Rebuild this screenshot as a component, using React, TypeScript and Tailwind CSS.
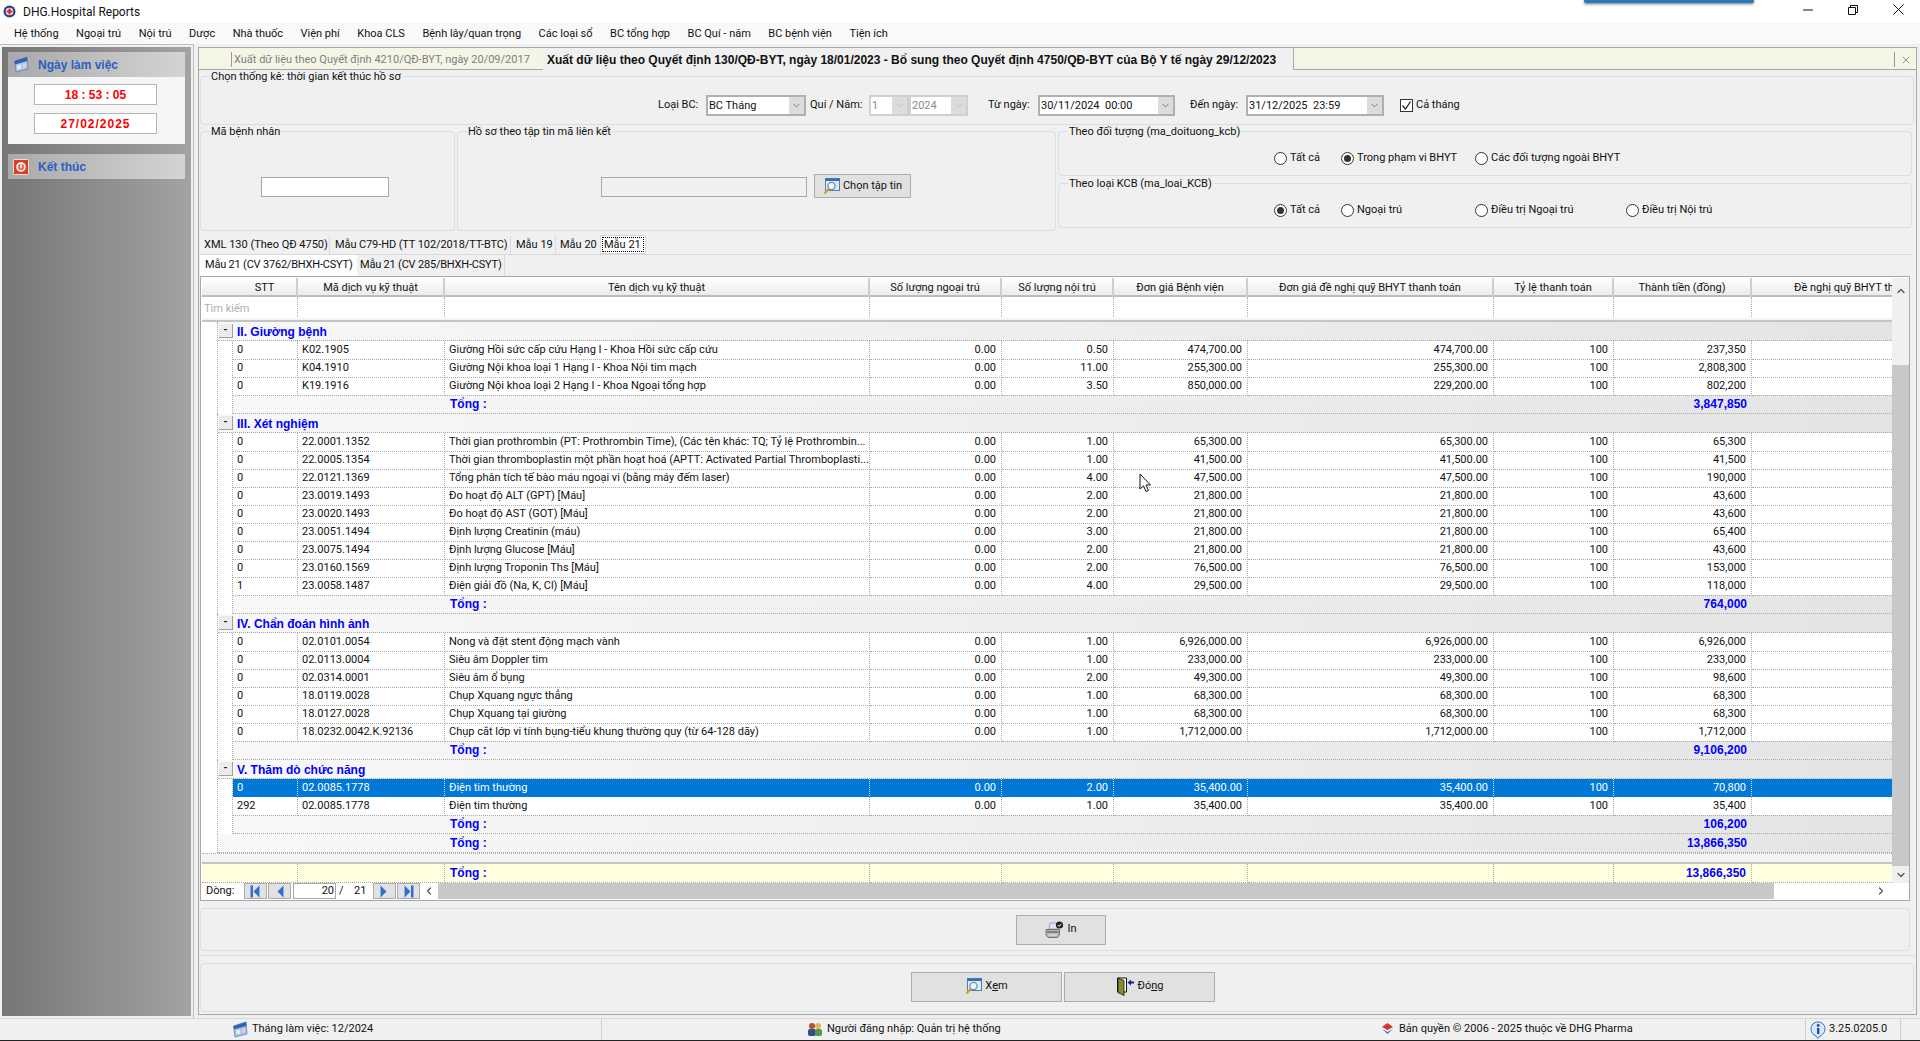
import { ChevronDown, ChevronLeft, ChevronRight, ChevronUp, X } from "lucide-react";
import type { ReactNode } from "react";

type Row = [string, string, string, string, string, string, string];
type Group = { title: string; total: string; rows: Row[]; selected?: number };

const menu = [
  "Hệ thống",
  "Ngoại trú",
  "Nội trú",
  "Dược",
  "Nhà thuốc",
  "Viện phí",
  "Khoa CLS",
  "Bệnh lây/quan trọng",
  "Các loại sổ",
  "BC tổng hợp",
  "BC Quí - năm",
  "BC bệnh viện",
  "Tiện ích",
];

const groups: Group[] = [
  {
    title: "II. Giường bệnh",
    total: "3,847,850",
    rows: [
      ["0", "K02.1905", "Giường Hồi sức cấp cứu Hạng I - Khoa Hồi sức cấp cứu", "0.50", "474,700.00", "474,700.00", "237,350"],
      ["0", "K04.1910", "Giường Nội khoa loại 1 Hạng I - Khoa Nội tim mạch", "11.00", "255,300.00", "255,300.00", "2,808,300"],
      ["0", "K19.1916", "Giường Nội khoa loại 2 Hạng I - Khoa Ngoại tổng hợp", "3.50", "850,000.00", "229,200.00", "802,200"],
    ],
  },
  {
    title: "III. Xét nghiệm",
    total: "764,000",
    rows: [
      ["0", "22.0001.1352", "Thời gian prothrombin (PT: Prothrombin Time), (Các tên khác: TQ; Tỷ lệ Prothrombin...", "1.00", "65,300.00", "65,300.00", "65,300"],
      ["0", "22.0005.1354", "Thời gian thromboplastin một phần hoạt hoá (APTT: Activated Partial Thromboplasti...", "1.00", "41,500.00", "41,500.00", "41,500"],
      ["0", "22.0121.1369", "Tổng phân tích tế bào máu ngoại vi (bằng máy đếm laser)", "4.00", "47,500.00", "47,500.00", "190,000"],
      ["0", "23.0019.1493", "Đo hoạt độ ALT (GPT) [Máu]", "2.00", "21,800.00", "21,800.00", "43,600"],
      ["0", "23.0020.1493", "Đo hoạt độ AST (GOT) [Máu]", "2.00", "21,800.00", "21,800.00", "43,600"],
      ["0", "23.0051.1494", "Định lượng Creatinin (máu)", "3.00", "21,800.00", "21,800.00", "65,400"],
      ["0", "23.0075.1494", "Định lượng Glucose [Máu]", "2.00", "21,800.00", "21,800.00", "43,600"],
      ["0", "23.0160.1569", "Định lượng Troponin Ths [Máu]", "2.00", "76,500.00", "76,500.00", "153,000"],
      ["1", "23.0058.1487", "Điện giải đồ (Na, K, Cl) [Máu]", "4.00", "29,500.00", "29,500.00", "118,000"],
    ],
  },
  {
    title: "IV. Chẩn đoán hình ảnh",
    total: "9,106,200",
    rows: [
      ["0", "02.0101.0054", "Nong và đặt stent động mạch vành", "1.00", "6,926,000.00", "6,926,000.00", "6,926,000"],
      ["0", "02.0113.0004", "Siêu âm Doppler tim", "1.00", "233,000.00", "233,000.00", "233,000"],
      ["0", "02.0314.0001", "Siêu âm ổ bụng", "2.00", "49,300.00", "49,300.00", "98,600"],
      ["0", "18.0119.0028", "Chụp Xquang ngực thẳng", "1.00", "68,300.00", "68,300.00", "68,300"],
      ["0", "18.0127.0028", "Chụp Xquang tại giường", "1.00", "68,300.00", "68,300.00", "68,300"],
      ["0", "18.0232.0042.K.92136", "Chụp cắt lớp vi tính bụng-tiểu khung thường quy (từ 64-128 dãy)", "1.00", "1,712,000.00", "1,712,000.00", "1,712,000"],
    ],
  },
  {
    title: "V. Thăm dò chức năng",
    total: "106,200",
    selected: 0,
    rows: [
      ["0", "02.0085.1778", "Điện tim thường", "2.00", "35,400.00", "35,400.00", "70,800"],
      ["292", "02.0085.1778", "Điện tim thường", "1.00", "35,400.00", "35,400.00", "35,400"],
    ],
  },
];

const headers = [
  "Mã dịch vụ kỹ thuật",
  "Tên dịch vụ kỹ thuật",
  "Số lượng ngoại trú",
  "Số lượng nội trú",
  "Đơn giá Bệnh viện",
  "Đơn giá đề nghị quỹ BHYT thanh toán",
  "Tỷ lệ thanh toán",
  "Thành tiền (đồng)",
];

const bold = "font-['Liberation_Sans',Arial,sans-serif] text-[12px] font-bold";
const cellLine = "border-r border-b border-dotted border-[#a9a9a9]";

const CalendarIcon = () => (
  <svg width="16" height="17" viewBox="0 0 16 17">
    <path d="M1.5 5 L14 1 L15 13 L3 16 Z" fill="#a9c4ea" stroke="#4f7cc0" strokeWidth="0.7" />
    <path d="M1.5 5 L14 1 L14.4 5 L2 8.6 Z" fill="#2f63b8" />
    <path d="M4 9.5 L8 8.5 L8.4 12.6 L4.5 13.6 Z" fill="#e4edf9" />
    <path d="M9.5 8 L13 7 L13.4 11 L10 12 Z" fill="#f0c9c4" />
  </svg>
);

const SearchFileIcon = () => (
  <svg width="17" height="17" viewBox="0 0 17 17">
    <rect x="2.5" y="0.5" width="14" height="12" fill="#dfeaf5" stroke="#4a7fb8" />
    <rect x="2.5" y="0.5" width="14" height="2.5" fill="#2f6fc0" />
    <circle cx="8.5" cy="8" r="3.6" fill="#eef6fb" stroke="#6d8fa8" strokeWidth="1.3" />
    <path d="M5.8 10.8 L1.5 15.5" stroke="#d99a2b" strokeWidth="2.2" />
  </svg>
);

const PrintIcon = () => (
  <svg width="19" height="18" viewBox="0 0 19 18">
    <path d="M5 2 H12 L13 8 H4 Z" fill="#dbe6f2" stroke="#8a97a5" strokeWidth="0.8" />
    <path d="M1 8.5 H14.5 V14 L12.5 16.5 H3 L1 14 Z" fill="#b4b4b4" stroke="#5f5f5f" strokeWidth="0.8" />
    <path d="M2 11 H13.5" stroke="#4f4f4f" />
    <path d="M3.5 14 H12" stroke="#efefef" />
    <circle cx="14.5" cy="4" r="3.6" fill="#222" />
    <path d="M12.8 4 L14.2 5.4 L16.3 2.8" fill="none" stroke="#fff" strokeWidth="1" />
  </svg>
);

const ExitIcon = () => (
  <svg width="19" height="19" viewBox="0 0 19 19">
    <path d="M1.5 1 H10.5 V15 H1.5 Z" fill="#fff" stroke="#111" strokeWidth="1" />
    <path d="M2 1 L8 3.5 V18.5 L2 15.5 Z" fill="#8c8a2a" stroke="#111" strokeWidth="0.8" />
    <path d="M11.5 5.5 L15 2.5 V4.5 H18 V6.5 H15 V8.5 Z" fill="#12249a" />
  </svg>
);

const NavIcon = ({ dir, end }: { dir: "left" | "right"; end?: boolean }) => (
  <button className="flex h-[16px] w-[23px] items-center justify-center border border-[#adadad] bg-[#e1e1e1]">
    <svg width="11" height="13" viewBox="0 0 11 13">
      {dir === "left" ? (
        <>
          {end && <rect x="0.5" y="0.5" width="2.5" height="12" fill="#2f6fd0" />}
          <path d="M9.5 0.5 V12.5 L3.5 6.5 Z" fill="#2f6fd0" stroke="#8fb4e8" strokeWidth="0.5" />
        </>
      ) : (
        <>
          <path d="M1.5 0.5 V12.5 L7.5 6.5 Z" fill="#2f6fd0" stroke="#8fb4e8" strokeWidth="0.5" />
          {end && <rect x="8" y="0.5" width="2.5" height="12" fill="#2f6fd0" />}
        </>
      )}
    </svg>
  </button>
);

const GroupBox = ({ label, className, children }: { label?: string; className: string; children?: ReactNode }) => (
  <div className={`relative rounded-[4px] border border-[#d5dfe5] ${className}`}>
    {label && <span className="absolute -top-[7px] left-[9px] whitespace-nowrap bg-[#f0f0f0] px-[1px] leading-[14px]">{label}</span>}
    {children}
  </div>
);

const Combo = ({ value, className, disabled }: { value: string; className: string; disabled?: boolean }) => (
  <div className={`flex h-[21px] items-center border-2 bg-white ${disabled ? "border-[#d0d0d0] text-[#8a8a8a]" : "border-[#b0b0b0]"} ${className}`}>
    <span className="flex-1 whitespace-pre pl-[1px] leading-none">{value}</span>
    <span className="flex h-full w-[15px] items-center justify-center bg-[#dcdcdc]">
      <ChevronDown size={11} color={disabled ? "#b5b5b5" : "#555"} strokeWidth={1.5} />
    </span>
  </div>
);

const Radio = ({ label, checked, className }: { label: string; checked?: boolean; className: string }) => (
  <div className={`flex items-center gap-[3px] ${className}`}>
    <span className="flex h-[13px] w-[13px] items-center justify-center rounded-full border border-[#333] bg-white">
      {checked && <span className="h-[7px] w-[7px] rounded-full bg-[#333]" />}
    </span>
    <span>{label}</span>
  </div>
);

const BlockButton = ({ label, className, children }: { label: ReactNode; className: string; children: ReactNode }) => (
  <button className={`flex items-center justify-center gap-[3px] border border-[#adadad] bg-[#e1e1e1] ${className}`}>
    {children}
    <span>{label}</span>
  </button>
);

const SideHeader = ({ label, children }: { label: string; children: ReactNode }) => (
  <div className={`flex h-[25px] items-center gap-[9px] bg-linear-to-r from-[#a9a9a9] to-[#d4d4d4] pl-[5px] text-[#2a5fc4] ${bold}`}>
    {children}
    <span>{label}</span>
  </div>
);

const DataRow = ({ row, selected }: { row: Row; selected: boolean }) => {
  const line = selected ? "border-r border-b border-dotted border-white/80" : cellLine;
  const nums = ["0.00", row[3], row[4], row[5], "100", row[6]];
  return (
    <div className={`grid h-[18px] grid-cols-[65px_147px_425px_132px_112px_134px_246px_120px_138px_140px] leading-[18px] ${selected ? "bg-[#0078d7] text-white" : "bg-white"}`}>
      {[row[0], row[1], row[2]].map((v, i) => (
        <div key={i} className={`${line} overflow-hidden whitespace-nowrap pl-[4px]`}>{v}</div>
      ))}
      {nums.map((v, i) => (
        <div key={i} className={`${line} pr-[5px] text-right`}>{v}</div>
      ))}
      <div className={selected ? "border-b border-dotted border-white/80" : "border-b border-dotted border-[#a9a9a9]"} />
    </div>
  );
};

const TotalRow = ({ value, indent }: { value: string; indent: boolean }) => (
  <div className={`grid h-[19px] border-b border-dotted border-[#a9a9a9] bg-linear-to-r from-[#f8f8f8] to-[#e4e4e4] leading-[19px] text-[#0000ff] ${bold} ${indent ? "grid-cols-[65px_147px_425px_882px_140px]" : "grid-cols-[80px_147px_425px_882px_140px]"}`}>
    <div />
    <div />
    <div className="pl-[5px]">Tổng :</div>
    <div className="pr-[5px] text-right">{value}</div>
    <div />
  </div>
);

const GroupBlock = ({ group }: { group: Group }) => (
  <div className="ml-[15px] border-l border-dotted border-[#a9a9a9]">
    <div className="flex h-[19px] items-center border-b border-dotted border-[#a9a9a9] bg-linear-to-r from-[#f8f8f8] to-[#e4e4e4]">
      <span className="ml-[1px] flex h-[14px] w-[14px] items-start justify-center border-r border-b border-[#a0a0a0] bg-[#ececec] text-[10px] font-bold leading-[11px]">-</span>
      <span className={`pl-[4px] pt-[1px] text-[#0000ff] ${bold}`}>{group.title}</span>
    </div>
    <div className="ml-[14px] border-l border-dotted border-[#a9a9a9]">
      {group.rows.map((row, i) => (
        <DataRow key={i} row={row} selected={group.selected === i} />
      ))}
      <TotalRow value={group.total} indent />
    </div>
  </div>
);

export default function App() {
  return (
    <div className="relative flex h-[1041px] w-[1920px] flex-col overflow-hidden bg-[#f0f0f0] font-['Roboto',Arial,sans-serif] text-[11px] text-[#111]">
      {/* title bar */}
      <div className="flex h-[23px] items-center bg-white">
        <svg className="ml-[3px]" width="13" height="13" viewBox="0 0 13 13">
          <circle cx="6.5" cy="6.5" r="6" fill="#27408b" />
          <circle cx="6.5" cy="6.5" r="3.8" fill="#f4f4f4" />
          <path d="M5.5 3.5 H7.5 V5.5 H9.5 V7.5 H7.5 V9.5 H5.5 V7.5 H3.5 V5.5 H5.5 Z" fill="#e01b24" />
        </svg>
        <span className="ml-[7px] text-[12px]">DHG.Hospital Reports</span>
        <div className="ml-auto flex items-center pb-[4px] pr-[2px]">
          <svg className="mr-[35px]" width="10" height="10" viewBox="0 0 10 10"><path d="M0 5 H10" stroke="#111" /></svg>
          <svg className="mr-[35px]" width="10" height="10" viewBox="0 0 10 10"><path d="M0.5 2.5 H7.5 V9.5 H0.5 Z M2.5 2.5 V0.5 H9.5 V7.5 H7.5" fill="none" stroke="#111" /></svg>
          <svg className="mr-[14px]" width="11" height="11" viewBox="0 0 11 11"><path d="M0.5 0.5 L10.5 10.5 M10.5 0.5 L0.5 10.5" stroke="#111" /></svg>
        </div>
      </div>
      <div className="absolute left-[1584px] top-0 h-[3px] w-[170px] rounded-b-[2px] bg-[#2a7ab5] shadow-[0_1px_3px_rgba(0,0,0,0.6)]" />

      {/* menu */}
      <div className="flex h-[21px] items-center gap-[17.5px] bg-[#f9f9f9] pl-[14px] pt-[1px]">
        {menu.map((item) => (
          <span key={item}>{item}</span>
        ))}
      </div>

      <div className="flex flex-1 gap-[5px]">
        {/* left panel */}
        <aside className="mt-[1px] h-[973px] w-[193px] border-2 border-[#f0f0f0] bg-linear-to-r from-[#767676] to-[#a3a3a3] px-[6px] pt-[5px] outline outline-[#bdbdbd]">
          <SideHeader label="Ngày làm việc">
            <CalendarIcon />
          </SideHeader>
          <div className="flex h-[67px] flex-col gap-[8px] bg-[#f5f5f5] pl-[26px] pt-[7px]">
            <div className={`flex h-[21px] w-[123px] items-center justify-center border border-[#b5b5b5] bg-white text-[#ff0000] ${bold}`}>18 : 53 : 05</div>
            <div className={`flex h-[21px] w-[123px] items-center justify-center border border-[#b5b5b5] bg-white tracking-[1px] text-[#ff0000] ${bold}`}>27/02/2025</div>
          </div>
          <div className="mt-[10px]">
            <SideHeader label="Kết thúc">
              <svg width="16" height="16" viewBox="0 0 16 16">
                <rect x="0.5" y="0.5" width="15" height="15" rx="1" fill="#d8402a" stroke="#f4d8d0" />
                <circle cx="8" cy="8" r="4" fill="#e8705a" stroke="#fff" strokeWidth="1.6" />
                <path d="M8 5 V9" stroke="#fff" strokeWidth="1.2" />
              </svg>
            </SideHeader>
          </div>
        </aside>

        {/* main panel */}
        <main className="mt-[3px] flex h-[968px] w-[1719px] flex-col border border-[#a8a8a8] bg-[#f0f0f0]">
          <div className="flex h-[22px] border-b border-[#a8a8a8] bg-[#f5f5e6]">
            <div className="ml-[32px] mt-[4px] h-[15px] border-l border-[#999]" />
            <div className="w-[311px] whitespace-nowrap pl-[2px] pt-[4px] text-[#808080]">Xuất dữ liệu theo Quyết định 4210/QĐ-BYT, ngày 20/09/2017</div>
            <div className={`-mb-px w-[751px] whitespace-nowrap border-r border-[#a8a8a8] bg-[#f0f0f0] pl-[4px] pt-[3px] ${bold}`}>Xuất dữ liệu theo Quyết định 130/QĐ-BYT, ngày 18/01/2023 - Bổ sung theo Quyết định 4750/QĐ-BYT của Bộ Y tế ngày 29/12/2023</div>
            <div className="ml-auto mt-[4px] flex h-[15px] w-[22px] items-center justify-center border-l border-[#999]">
              <X size={12} strokeWidth={1.2} color="#555" />
            </div>
          </div>

          <div className="px-[1px]">
            <GroupBox label="Chọn thống kê: thời gian kết thúc hồ sơ" className="mt-[6px] flex h-[49px] w-[1714px] items-center pl-[457px] pt-[10px]">
              <span className="w-[48px]">Loại BC:</span>
              <Combo value="BC Tháng" className="w-[100px]" />
              <span className="ml-[4px] w-[59px]">Quí / Năm:</span>
              <Combo value="1" disabled className="w-[40px]" />
              <Combo value="2024" disabled className="w-[59px]" />
              <span className="ml-[20px] w-[50px]">Từ ngày:</span>
              <Combo value="30/11/2024  00:00" className="w-[137px]" />
              <span className="ml-[15px] w-[56px]">Đến ngày:</span>
              <Combo value="31/12/2025  23:59" className="w-[138px]" />
              <span className="ml-[16px] flex h-[13px] w-[13px] items-center justify-center border border-[#333] bg-white">
                <svg width="11" height="11" viewBox="0 0 11 11">
                  <path d="M1.5 5.5 L4.5 9 L9.5 1.5" fill="none" stroke="#222" strokeWidth="1.3" />
                </svg>
              </span>
              <span className="ml-[3px]">Cả tháng</span>
            </GroupBox>

            <div className="mt-[6px] flex h-[100px] gap-[2px]">
              <GroupBox label="Mã bệnh nhân" className="w-[255px] pl-[60px] pt-[45px]">
                <div className="h-[20px] w-[128px] border border-[#a8a8a8] bg-white" />
              </GroupBox>
              <GroupBox label="Hồ sơ theo tập tin mã liên kết" className="flex w-[599px] items-start pl-[143px] pt-[42px]">
                <div className="mt-[3px] h-[20px] w-[206px] border border-[#a8a8a8] bg-[#f0f0f0]" />
                <BlockButton label="Chọn tập tin" className="ml-[7px] h-[24px] w-[97px]">
                  <SearchFileIcon />
                </BlockButton>
              </GroupBox>
              <div className="flex w-[854px] flex-col gap-[7px]">
                <GroupBox label="Theo đối tượng (ma_doituong_kcb)" className="flex h-[45px] items-center pl-[215px] pt-[9px]">
                  <Radio label="Tất cả" className="w-[67px]" />
                  <Radio label="Trong phạm vi BHYT" checked className="w-[134px]" />
                  <Radio label="Các đối tượng ngoài BHYT" className="w-[200px]" />
                </GroupBox>
                <GroupBox label="Theo loại KCB (ma_loai_KCB)" className="flex h-[45px] items-center pl-[215px] pt-[9px]">
                  <Radio label="Tất cả" checked className="w-[67px]" />
                  <Radio label="Ngoại trú" className="w-[134px]" />
                  <Radio label="Điều trị Ngoại trú" className="w-[151px]" />
                  <Radio label="Điều trị Nội trú" className="w-[150px]" />
                </GroupBox>
              </div>
            </div>

            {/* report tabs */}
            <div className="mt-[5px] flex h-[19px] w-[1712px] items-stretch whitespace-nowrap border-b border-[#d9d9d9] leading-[18px]">
              <span className="w-[130px] border-r border-[#d9d9d9] pl-[4px]">XML 130 (Theo QĐ 4750)</span>
              <span className="w-[181px] border-r border-[#d9d9d9] pl-[5px] tracking-[-0.1px]">Mẫu C79-HD (TT 102/2018/TT-BTC)</span>
              <span className="w-[45px] border-r border-[#d9d9d9] pl-[5px]">Mẫu 19</span>
              <span className="w-[44px] pl-[4px]">Mẫu 20</span>
              <span className="-mt-[1px] h-[19px] w-[46px] border border-[#d9d9d9] bg-white p-[1px] leading-[14px]">
                <span className="block h-[15px] border border-dotted border-black pl-[1px]">Mẫu 21</span>
              </span>
            </div>
            <div className="flex h-[21px] items-stretch whitespace-nowrap leading-[19px] tracking-[-0.2px]">
              <span className="w-[157px] bg-white pl-[5px]">Mẫu 21 (CV 3762/BHXH-CSYT)</span>
              <span className="w-[148px] border-r border-[#d9d9d9] pl-[3px]">Mẫu 21 (CV 285/BHXH-CSYT)</span>
            </div>

            {/* grid */}
            <div className="h-[625px] w-[1710px] border border-[#a8a8a8] bg-white pl-[1px] pt-[1px]">
              <div className="flex h-[605px]">
                <div className="flex w-[1690px] flex-col">
                  <div className="grid h-[19px] grid-cols-[96px_147px_425px_132px_112px_134px_246px_120px_138px_140px] border-b-2 border-[#bdbdbd] bg-linear-to-b from-white to-[#ececec] leading-[19px]">
                    <div className="border-r-2 border-[#cfcfcf] pl-[31px] text-center">STT</div>
                    {headers.map((h) => (
                      <div key={h} className="overflow-hidden whitespace-nowrap border-r-2 border-[#cfcfcf] text-center">{h}</div>
                    ))}
                    <div className="whitespace-nowrap pl-[42px]">Đề nghị quỹ BHYT th</div>
                  </div>
                  <div className="grid h-[21px] grid-cols-[96px_147px_425px_132px_112px_134px_246px_120px_138px_140px] leading-[23px]">
                    <div className={`${cellLine} pl-[2px] text-[#b0b0b0]`}>Tìm kiếm</div>
                    {headers.map((h) => (
                      <div key={h} className={cellLine} />
                    ))}
                    <div className="border-b border-dotted border-[#a9a9a9]" />
                  </div>
                  <div className="h-[4px] border-b-2 border-[#c4c4c4] bg-[#f4f4f4]" />
                  <div className="border-b border-dotted border-[#a9a9a9]">
                    {groups.map((g) => (
                      <GroupBlock key={g.title} group={g} />
                    ))}
                    <div className="ml-[15px] border-l border-dotted border-[#a9a9a9]">
                      <TotalRow value="13,866,350" indent={false} />
                    </div>
                  </div>
                  <div className="h-[10px] border-b-2 border-[#c4c4c4] bg-[#f4f4f4]" />
                  <div className={`grid h-[18px] grid-cols-[96px_147px_425px_132px_112px_134px_246px_120px_138px_140px] bg-[#ffffe0] leading-[18px] text-[#0000ff] ${bold}`}>
                    <div className={cellLine} />
                    <div className={cellLine} />
                    <div className={`${cellLine} pl-[5px]`}>Tổng :</div>
                    <div className={cellLine} />
                    <div className={cellLine} />
                    <div className={cellLine} />
                    <div className={cellLine} />
                    <div className={cellLine} />
                    <div className={`${cellLine} pr-[5px] text-right`}>13,866,350</div>
                    <div className="border-b border-dotted border-[#a9a9a9]" />
                  </div>
                </div>
                {/* vertical scroll */}
                <div className="flex w-[17px] flex-col bg-[#f0f0f0]">
                  <div className="flex h-[18px] items-center justify-center pt-[8px]"><ChevronUp size={12} strokeWidth={2.5} color="#555" /></div>
                  <div className="mt-[69px] h-[501px] bg-[#c8c8c8]" />
                  <div className="flex h-[17px] items-center justify-center"><ChevronDown size={12} strokeWidth={2.5} color="#555" /></div>
                </div>
              </div>
              {/* pager + horizontal scroll */}
              <div className="flex h-[16px] items-center">
                <span className="w-[42px] pl-[4px]">Dòng:</span>
                <NavIcon dir="left" end />
                <span className="w-[1px]" />
                <NavIcon dir="left" />
                <div className="ml-[2px] h-[16px] w-[43px] border border-[#a8a8a8] bg-white pr-[1px] text-right leading-[14px]">20</div>
                <span className="ml-[3px] w-[15px]">/</span>
                <span className="w-[19px]">21</span>
                <NavIcon dir="right" />
                <span className="w-[1px]" />
                <NavIcon dir="right" end />
                <span className="flex w-[18px] justify-center"><ChevronLeft size={12} strokeWidth={2.5} color="#555" /></span>
                <div className="h-[16px] w-[1336px] bg-[#c8c8c8]" />
                <span className="ml-[100px] flex w-[14px] justify-center"><ChevronRight size={12} strokeWidth={2.5} color="#555" /></span>
              </div>
            </div>

            <GroupBox className="mt-[7px] flex h-[43px] w-[1710px] items-center justify-center">
              <BlockButton label="In" className="ml-[12px] h-[30px] w-[90px]">
                <PrintIcon />
              </BlockButton>
            </GroupBox>
            <div className="mt-[4px] border-t border-[#d9d9d9]" />
            <GroupBox className="mt-[7px] flex h-[49px] w-[1714px] items-center justify-center gap-[2px] pb-[2px] pl-[12px]">
              <BlockButton label={<>X<span className="underline">e</span>m</>} className="h-[30px] w-[151px]">
                <SearchFileIcon />
              </BlockButton>
              <BlockButton label={<>Đó<span className="underline">n</span>g</>} className="h-[30px] w-[151px]">
                <ExitIcon />
              </BlockButton>
            </GroupBox>
          </div>
        </main>
      </div>

      {/* status bar */}
      <div className="mt-auto flex h-[23px] items-center border-t border-[#d9d9d9] border-b border-b-[#222] bg-[#f0f0f0]">
        <div className="flex h-full w-[602px] items-center gap-[4px] border-r border-[#d0d0d0] pl-[232px]">
          <CalendarIcon />
          <span>Tháng làm việc: 12/2024</span>
        </div>
        <div className="flex h-full w-[579px] items-center gap-[4px] pl-[205px]">
          <svg width="16" height="15" viewBox="0 0 16 15">
            <circle cx="5" cy="4" r="3" fill="#b5532a" />
            <rect x="1" y="7" width="8" height="7" rx="2" fill="#2f4f8f" />
            <circle cx="11" cy="4" r="3" fill="#e5b25a" />
            <rect x="8" y="7" width="7" height="7" rx="2" fill="#4f9a4a" />
          </svg>
          <span>Người đăng nhập: Quản trị hệ thống</span>
        </div>
        <div className="flex h-full w-[625px] items-center gap-[4px] border-r border-[#d0d0d0] pl-[199px]">
          <svg width="15" height="15" viewBox="0 0 15 15">
            <path d="M7.5 1 L13 5 L7.5 8 L2 5 Z" fill="#d8352a" />
            <path d="M2 7 L7.5 10 L13 7 L7.5 12 Z" fill="#3f78c4" />
          </svg>
          <span>Bản quyền © 2006 - 2025 thuộc về DHG Pharma</span>
        </div>
        <div className="flex h-full w-[95px] items-center gap-[3px] border-r border-[#d0d0d0] pl-[4px]">
          <svg width="16" height="18" viewBox="0 0 16 18">
            <path d="M8 1 C12 1 15 4 15 8 C15 12 12 14 10 15 L8 17.5 L6 15 C4 14 1 12 1 8 C1 4 4 1 8 1 Z" fill="#dbe9fa" stroke="#2f6fd0" />
            <rect x="7" y="7" width="2.4" height="6" fill="#1c4fa8" />
            <circle cx="8.2" cy="4.5" r="1.4" fill="#1c4fa8" />
          </svg>
          <span>3.25.0205.0</span>
        </div>
      </div>

      {/* mouse pointer */}
      <svg className="absolute left-[1139px] top-[473px]" width="13" height="20" viewBox="0 0 13 20">
        <path d="M1 1 V16 L4.5 12.8 L7 18.5 L9.5 17.5 L7 12 H11.5 Z" fill="#fff" stroke="#111" strokeWidth="1" />
      </svg>
    </div>
  );
}
